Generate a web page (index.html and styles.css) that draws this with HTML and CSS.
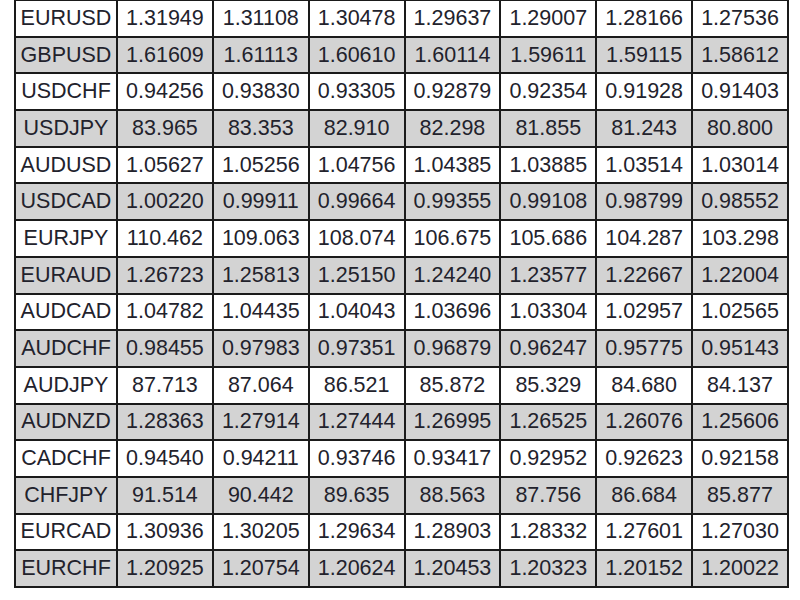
FILE: index.html
```html
<!DOCTYPE html>
<html>
<head>
<meta charset="utf-8">
<link rel="stylesheet" href="styles.css">
</head>
<body>
<table class="rates">
<colgroup><col class="c-pair"><col class="c-val"><col class="c-val"><col class="c-val"><col class="c-val"><col class="c-val"><col class="c-val"><col class="c-val"></colgroup>
<tbody>
<tr><td>EURUSD</td><td>1.31949</td><td>1.31108</td><td>1.30478</td><td>1.29637</td><td>1.29007</td><td>1.28166</td><td>1.27536</td></tr>
<tr class="alt"><td>GBPUSD</td><td>1.61609</td><td>1.61113</td><td>1.60610</td><td>1.60114</td><td>1.59611</td><td>1.59115</td><td>1.58612</td></tr>
<tr><td>USDCHF</td><td>0.94256</td><td>0.93830</td><td>0.93305</td><td>0.92879</td><td>0.92354</td><td>0.91928</td><td>0.91403</td></tr>
<tr class="alt"><td>USDJPY</td><td>83.965</td><td>83.353</td><td>82.910</td><td>82.298</td><td>81.855</td><td>81.243</td><td>80.800</td></tr>
<tr><td>AUDUSD</td><td>1.05627</td><td>1.05256</td><td>1.04756</td><td>1.04385</td><td>1.03885</td><td>1.03514</td><td>1.03014</td></tr>
<tr class="alt"><td>USDCAD</td><td>1.00220</td><td>0.99911</td><td>0.99664</td><td>0.99355</td><td>0.99108</td><td>0.98799</td><td>0.98552</td></tr>
<tr><td>EURJPY</td><td>110.462</td><td>109.063</td><td>108.074</td><td>106.675</td><td>105.686</td><td>104.287</td><td>103.298</td></tr>
<tr class="alt"><td>EURAUD</td><td>1.26723</td><td>1.25813</td><td>1.25150</td><td>1.24240</td><td>1.23577</td><td>1.22667</td><td>1.22004</td></tr>
<tr><td>AUDCAD</td><td>1.04782</td><td>1.04435</td><td>1.04043</td><td>1.03696</td><td>1.03304</td><td>1.02957</td><td>1.02565</td></tr>
<tr class="alt"><td>AUDCHF</td><td>0.98455</td><td>0.97983</td><td>0.97351</td><td>0.96879</td><td>0.96247</td><td>0.95775</td><td>0.95143</td></tr>
<tr><td>AUDJPY</td><td>87.713</td><td>87.064</td><td>86.521</td><td>85.872</td><td>85.329</td><td>84.680</td><td>84.137</td></tr>
<tr class="alt"><td>AUDNZD</td><td>1.28363</td><td>1.27914</td><td>1.27444</td><td>1.26995</td><td>1.26525</td><td>1.26076</td><td>1.25606</td></tr>
<tr><td>CADCHF</td><td>0.94540</td><td>0.94211</td><td>0.93746</td><td>0.93417</td><td>0.92952</td><td>0.92623</td><td>0.92158</td></tr>
<tr class="alt"><td>CHFJPY</td><td>91.514</td><td>90.442</td><td>89.635</td><td>88.563</td><td>87.756</td><td>86.684</td><td>85.877</td></tr>
<tr><td>EURCAD</td><td>1.30936</td><td>1.30205</td><td>1.29634</td><td>1.28903</td><td>1.28332</td><td>1.27601</td><td>1.27030</td></tr>
<tr class="alt"><td>EURCHF</td><td>1.20925</td><td>1.20754</td><td>1.20624</td><td>1.20453</td><td>1.20323</td><td>1.20152</td><td>1.20022</td></tr>
</tbody>
</table>
</body>
</html>
```
FILE: styles.css
```css
html, body {
  margin: 0;
  padding: 0;
  background: #ffffff;
}
body {
  padding: 0 0 0 14px;
}
.rates {
  border-collapse: collapse;
  table-layout: fixed;
  width: 773px;
  margin-top: -1px;
  font-family: "Liberation Sans", Arial, sans-serif;
  font-size: 21.5px;
  color: #22222c;
}
.c-pair { width: 102px; }
.c-val { width: 95.85px; }
.rates td {
  border: 2px solid #1a1a1a;
  height: 34.7px;
  padding: 0;
  text-align: center;
  vertical-align: middle;
  white-space: nowrap;
  overflow: hidden;
}
.rates tr.alt td {
  background: #d3d3d3;
}
```
